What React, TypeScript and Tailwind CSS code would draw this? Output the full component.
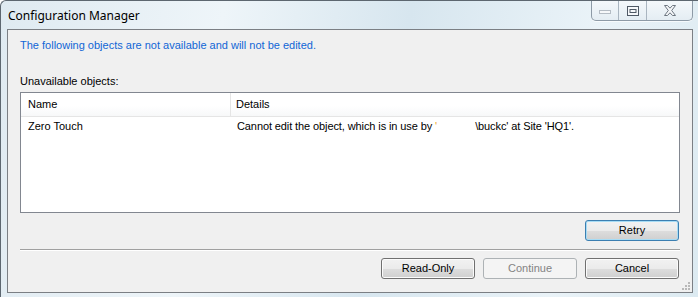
import React from 'react';

const body = { fontFamily: '"Liberation Sans", Arial, sans-serif' };

function WinButton({ label, focused, disabled }: { label: string; focused?: boolean; disabled?: boolean }) {
  if (disabled) {
    return (
      <div className="w-[94px] h-[21px] flex items-center justify-center rounded-[3px] border border-[#adb2b5] bg-[#f4f4f4] text-[11px] text-[#838383]">
        {label}
      </div>
    );
  }
  return (
    <div
      className={
        'w-[94px] h-[21px] flex items-center justify-center rounded-[3px] border text-[11px] text-black bg-[linear-gradient(#f2f2f2_0%,#ebebeb_50%,#dddddd_51%,#cfcfcf_100%)] ' +
        (focused ? 'border-[#3c7fb1] shadow-[inset_0_0_0_1px_#a7dcf5]' : 'border-[#707070] shadow-[inset_0_0_0_1px_#fbfbfb]')
      }
    >
      {label}
    </div>
  );
}

function CaptionButtons() {
  return (
    <div className="flex h-[20px] border border-t-0 border-[#8d9aa6] rounded-b-[5px] bg-[linear-gradient(#f4f8fb,#e4edf3)] shadow-[0_1px_0_#ffffffaa]">
      <div className="w-[27px] flex items-center justify-center border-r border-[#a9b5c0]">
        <svg width="12" height="6" viewBox="0 0 12 6">
          <rect x="0.5" y="2.5" width="11" height="3" fill="#f6f8fa" stroke="#b4bcc4" />
        </svg>
      </div>
      <div className="w-[28px] flex items-center justify-center border-r border-[#a9b5c0]">
        <svg width="12" height="10" viewBox="0 0 12 10">
          <rect x="0.5" y="0.5" width="11" height="9" fill="#f6f8fa" stroke="#4f5965" />
          <rect x="3" y="3.5" width="6" height="3" fill="none" stroke="#4f5965" />
        </svg>
      </div>
      <div className="w-[45px] flex items-center justify-center">
        <svg width="14" height="11" viewBox="0 0 14 11">
          <path
            d="M1.5 0.5 L4.5 0.5 L7 3.2 L9.5 0.5 L12.5 0.5 L8.7 5.5 L12.5 10.5 L9.5 10.5 L7 7.8 L4.5 10.5 L1.5 10.5 L5.3 5.5 Z"
            fill="#f4f6f8"
            stroke="#6d7680"
          />
        </svg>
      </div>
    </div>
  );
}

export default function App() {
  return (
    <div
      className="w-[698px] h-[297px] overflow-hidden flex flex-col border-l border-t border-[#5d6770] rounded-tl-[6px] bg-[linear-gradient(100deg,#dfeaf1_0%,#eef5f9_30%,#d7e6ef_55%,#eaf3f8_80%,#dceaf1_100%)]"
      style={body}
    >
      <div className="h-[28px] flex items-start justify-between pl-[7px] pr-[5px]">
        <span className="pt-[6px] text-[12px] text-black" style={{ fontFamily: '"Noto Sans", "Liberation Sans", sans-serif' }}>
          Configuration Manager
        </span>
        <CaptionButtons />
      </div>

      <div className="ml-[6px] mr-[5px] h-[264px] border border-[#7b7f84] bg-[#f0f0f0] flex flex-col px-[12px] relative">
        <div className="mt-[9px] h-[13px] leading-[13px] text-[11px] text-[#1166d6]">
          The following objects are not available and will not be edited.
        </div>
        <div className="mt-[23px] h-[13px] leading-[13px] text-[11px] text-black">Unavailable objects:</div>

        <div className="mt-[4px] h-[121px] border border-[#828790] bg-white flex flex-col text-[11px] text-black">
          <div className="h-[24px] flex border-b border-[#e5e5e5] bg-[linear-gradient(#ffffff_0%,#ffffff_55%,#f7f8f9_100%)]">
            <div className="w-[210px] border-r border-[#e5e5e5] pl-[7px] flex items-center">Name</div>
            <div className="flex-1 pl-[5px] flex items-center">Details</div>
          </div>
          <div className="h-[19px] flex items-center">
            <div className="w-[211px] pl-[7px]">Zero Touch</div>
            <div className="flex-1 pl-[5px] whitespace-nowrap tracking-[-0.1px]">
              Cannot edit the object, which is in use by <span className="text-[#f0a828]">'</span>
              <span className="inline-block w-[38px]" />\buckc' at Site 'HQ1'.
            </div>
          </div>
        </div>

        <div className="mt-[7px] flex justify-end pr-[1px]">
          <WinButton label="Retry" focused />
        </div>

        <div className="mt-[8px] h-[2px] border-t border-[#a0a0a0] border-b border-b-white" />

        <div className="mt-[7px] flex justify-end gap-[8px] pr-[1px]">
          <WinButton label="Read-Only" />
          <WinButton label="Continue" disabled />
          <WinButton label="Cancel" />
        </div>

        <svg className="absolute right-[1px] bottom-[1px]" width="10" height="10" viewBox="0 0 10 10">
          <g fill="#b8b8b8">
            <rect x="7" y="1" width="2" height="2" />
            <rect x="4" y="4" width="2" height="2" />
            <rect x="7" y="4" width="2" height="2" />
            <rect x="1" y="7" width="2" height="2" />
            <rect x="4" y="7" width="2" height="2" />
            <rect x="7" y="7" width="2" height="2" />
          </g>
        </svg>
      </div>
    </div>
  );
}
